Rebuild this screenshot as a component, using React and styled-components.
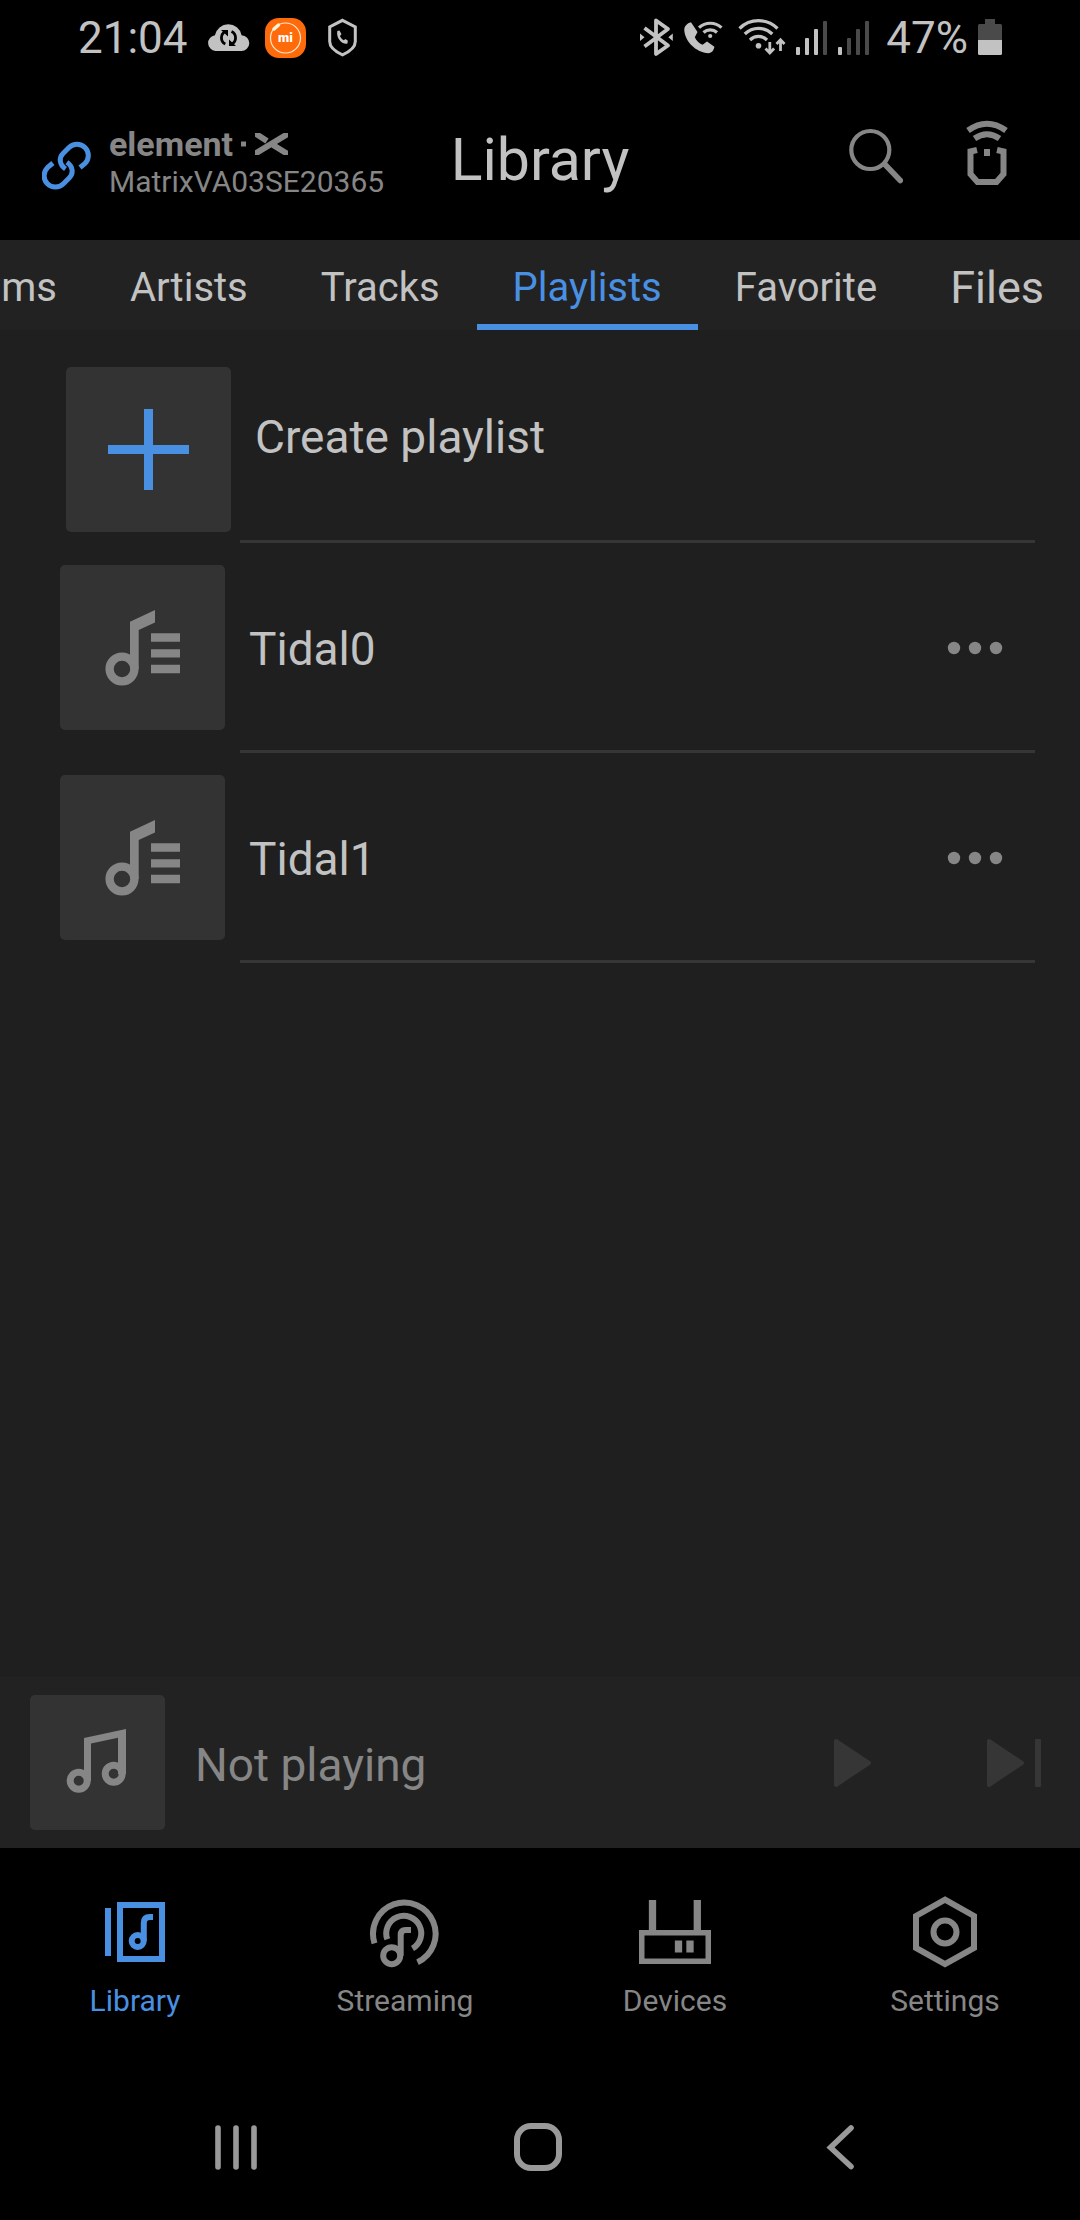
import React, { useState } from 'react'
import styled, { createGlobalStyle, css } from 'styled-components'

const colors = {
  page: '#1f1f1f',
  bar: '#222222',
  tile: '#333333',
  line: '#363636',
  text: '#c2c2c2',
  muted: '#868686',
  accent: '#4a90e2'
}

const GlobalStyle = createGlobalStyle`
  * {
    box-sizing: border-box;
  }

  body {
    margin: 0;
    background: #000;
    color: ${colors.text};
    font-family: Roboto, sans-serif;
  }

  button {
    margin: 0;
    padding: 0;
    border: 0;
    background: none;
    color: inherit;
    font: inherit;
    cursor: pointer;
  }

  svg {
    display: block;
    flex: none;
  }
`

const Screen = styled.div`
  display: flex;
  flex-direction: column;
  min-height: 100vh;
`

/* status bar */

const StatusBar = styled.div`
  display: flex;
  justify-content: space-between;
  align-items: center;
  height: 80px;
  padding: 0 78px 4px;
  font-size: 44px;
  line-height: 52px;
`

const StatusGroup = styled.div`
  display: flex;
  align-items: center;
  gap: ${({ $gap }) => $gap}px;
`

const Percent = styled.span`
  padding-left: 6px;
`

/* header */

const StyledHeader = styled.header`
  display: grid;
  grid-template-columns: 1fr auto 1fr;
  align-items: center;
  height: 160px;
  padding: 0 72px 0 42px;
`

const Device = styled.a`
  display: flex;
  align-items: center;
  gap: 18px;
  width: 0;
  padding-top: 6px;
  color: ${colors.muted};
  font-size: 30px;
  line-height: 36px;
  text-decoration: none;
  white-space: nowrap;
`

const DeviceText = styled.span`
  display: flex;
  flex-direction: column;
  gap: 2px;
`

const Brand = styled.span`
  display: flex;
  align-items: center;
  gap: 8px;
  font-size: 34px;
  font-weight: 700;
`

const Title = styled.h1`
  margin: 0;
  padding-left: 30px;
  font-size: 59px;
  font-weight: 400;
  line-height: 70px;
`

const Tools = styled.div`
  display: flex;
  justify-content: flex-end;
  gap: 63px;
  padding-bottom: 14px;
  color: ${colors.muted};
`

/* tabs */

const Tabs = styled.nav`
  display: flex;
  justify-content: flex-end;
  gap: 1px;
  height: 90px;
  overflow: hidden;
  background: ${colors.bar};
`

const Tab = styled.button`
  flex: none;
  padding: 10px 36px 0;
  border-bottom: 6px solid transparent;
  font-size: ${({ $large }) => ($large ? 45 : 40)}px;

  ${({ $active }) =>
    $active &&
    css`
      border-bottom-color: ${colors.accent};
      color: ${colors.accent};
    `}
`

/* playlists */

const Content = styled.main`
  flex: 1;
  background: ${colors.page};
`

const List = styled.ul`
  margin: 0;
  padding: 0;
  list-style: none;
`

const Row = styled.li`
  display: flex;
`

const Tile = styled.div`
  display: flex;
  flex: none;
  justify-content: center;
  align-items: center;
  width: ${({ $size }) => $size}px;
  height: ${({ $size }) => $size}px;
  border-radius: 5px;
  background: ${colors.tile};
  color: ${colors.muted};
`

const PlaylistTile = styled(Tile).attrs({ $size: 165 })`
  margin: 22px 15px 23px 60px;
`

const CreateTile = styled(Tile).attrs({ $size: 165 })`
  margin: 37px 9px 11px 66px;
  color: ${colors.accent};
`

const RowBody = styled.div`
  display: flex;
  flex: 1;
  justify-content: space-between;
  align-items: center;
  margin-right: 45px;
  padding: 0 30px 0 ${({ $inset }) => $inset}px;
  border-bottom: 3px solid ${colors.line};
`

const RowTitle = styled.button`
  flex: 1;
  padding-top: 4px;
  font-size: 46px;
  line-height: 54px;
  text-align: left;
`

const MoreButton = styled.button`
  padding: 22px 0 20px;
  color: ${colors.muted};
`

/* player */

const Player = styled.section`
  display: flex;
  align-items: center;
  gap: 30px;
  padding: 18px 39px 18px 30px;
  background: ${colors.bar};
`

const NowPlaying = styled.span`
  flex: 1;
  padding-top: 4px;
  color: ${colors.muted};
  font-size: 46px;
  line-height: 54px;
`

const Controls = styled.div`
  display: flex;
  gap: 116px;
  color: ${colors.line};
`

/* bottom navigation */

const BottomNav = styled.nav`
  display: flex;
  height: 227px;
  padding-top: 48px;
`

const NavLink = styled.a`
  display: flex;
  flex: 1;
  flex-direction: column;
  align-items: center;
  gap: 15px;
  color: ${({ $active }) => ($active ? colors.accent : colors.muted)};
  font-size: 30px;
  line-height: 36px;
  text-decoration: none;
`

const SystemNav = styled.div`
  display: flex;
  height: 145px;
  padding: 0 89px 2px 85px;
  color: #999;
`

const SystemButton = styled.button`
  display: flex;
  flex: 1;
  justify-content: center;
  align-items: center;
`

/* icons */

const Icon = ({ width, height, children, ...rest }) => (
  <svg
    width={width}
    height={height}
    viewBox={`0 0 ${width} ${height}`}
    fill='none'
    stroke='currentColor'
    aria-hidden='true'
    {...rest}
  >
    {children}
  </svg>
)

const CloudSyncIcon = () => (
  <Icon width={49} height={40} stroke='none'>
    <path
      fill='currentColor'
      d='M13.5 33a7.9 7.9 0 0 1-.6-15.7A13.6 13.6 0 0 1 39.6 17.2 7.9 7.9 0 0 1 39.2 33z'
    />
    <g fill='none' stroke='#000' strokeWidth='2.8'>
      <path d='M23.5 13.5a7 7 0 0 0-.2 12.6M29.5 13.5a7 7 0 0 1 .2 12.6' />
    </g>
    <path fill='#000' d='M19 12h7v6.5zM34 28h-7v-6.5z' />
  </Icon>
)

const MiIcon = () => (
  <Icon width={41} height={40} stroke='none'>
    <rect width='41' height='40' rx='14' fill='#ff6a0b' />
    <circle cx='20.5' cy='20' r='15' stroke='#ffe9d0' strokeWidth='1.2' />
    <path d='M9 11l4.5-4' stroke='#fff3d8' strokeWidth='3.5' strokeLinecap='round' />
    <text
      x='20.5'
      y='24'
      fill='#fff'
      fontFamily='Roboto, sans-serif'
      fontSize='13'
      fontWeight='900'
      textAnchor='middle'
    >
      mi
    </text>
  </Icon>
)

const ShieldCallIcon = () => (
  <Icon width={44} height={40} strokeWidth='3'>
    <path d='M22.5 2.3L35.3 9v14.5c0 6-6.5 10.5-12.8 13.3C16.2 34 9.7 29.5 9.7 23.5V9z' />
    <path
      d='M19.5 12.5l2 3.7-1.6 1.9c.9 1.9 2.2 3.3 3.9 4.2l1.7-1.4 2.4 1.8-.6 3C21.5 26.5 16 20 17.3 13z'
      fill='currentColor'
      stroke='none'
    />
  </Icon>
)

const BluetoothIcon = () => (
  <Icon width={36} height={40} strokeWidth='3.8' strokeLinejoin='round'>
    <path d='M6.5 10L30 27.5 18 36V2.5L30 11 6.5 28.5' />
    <path d='M2 15.5l4.5 3.7L2 23zM34.8 15.5l-4.5 3.7 4.5 3.8z' fill='currentColor' stroke='none' />
  </Icon>
)

const WifiCallIcon = () => (
  <Icon width={42} height={40} strokeWidth='3.2'>
    <path
      d='M7 4.2c-4 1-7 4-6.7 8.3C1.3 24 12 34.3 24.5 35.2c3.2 0 5.5-3.2 5.9-6.4L23 23.5l-4.5 3.3c-3.5-1.5-6-4-7.7-7.6l2.7-5.2z'
      fill='currentColor'
      stroke='none'
    />
    <path d='M15 9.7a16.5 16.5 0 0 1 22.5 0M19.5 14.5a10 10 0 0 1 13.5 0' />
    <circle cx='26.2' cy='18' r='2.1' fill='currentColor' stroke='none' />
  </Icon>
)

const WifiIcon = () => (
  <Icon width={50} height={40} strokeWidth='3.2'>
    <path d='M3.5 10.5a27 27 0 0 1 38 0M8.8 16a19.5 19.5 0 0 1 27.5 0M14 22a12 12 0 0 1 17 0' />
    <circle cx='22.5' cy='27.8' r='2.8' fill='currentColor' stroke='none' />
    <path d='M33.8 24v11M29.5 30.5l4.3 4.5 4.3-4.5M44.5 33V21.5M40.5 26l4-4.3 4 4.3' strokeWidth='2.8' />
  </Icon>
)

const SignalIcon = ({ level }) => (
  <Icon width={32} height={40} stroke='none'>
    {[8, 17, 26, 34].map((h, i) => (
      <rect
        key={h}
        x={i * 9}
        y={37 - h}
        width='4'
        height={h}
        rx='1'
        fill={i < level ? 'currentColor' : '#4a4a4a'}
      />
    ))}
  </Icon>
)

const BatteryIcon = () => (
  <Icon width={24} height={40} stroke='none'>
    <path d='M7 1h10v5h5.5a1.5 1.5 0 0 1 1.5 1.5V22H0V7.5A1.5 1.5 0 0 1 1.5 6H7z' fill='#4a4a4a' />
    <path d='M0 22h24v13.5a1.5 1.5 0 0 1-1.5 1.5h-21A1.5 1.5 0 0 1 0 35.5z' fill='currentColor' />
  </Icon>
)

const LinkIcon = () => (
  <Icon width={49} height={56} stroke={colors.accent} strokeWidth='5'>
    <g transform='translate(0 6)'>
      <path d='M23.5 28C17 23.5 17 16.5 21 12.5L27 6.5A11.3 11.3 0 0 1 43 22.5L38 26.5' />
      <path d='M24.9 21.2C31.4 25.7 31.4 32.7 27.4 36.7L21.4 42.7A11.3 11.3 0 0 1 5.4 26.7L10.9 22' />
    </g>
  </Icon>
)

const BrandMark = () => (
  <Icon width={47} height={22} strokeWidth='6'>
    <path d='M0 11h5' strokeWidth='5' />
    <g clipPath='url(#mark)'>
      <path d='M12 22L50-1M12-1l14 9M32 12l18 11' />
    </g>
    <clipPath id='mark'>
      <path d='M14 0h33v22H14z' />
    </clipPath>
  </Icon>
)

const SearchIcon = () => (
  <Icon width={54} height={66} strokeWidth='4.2' strokeLinecap='round'>
    <circle cx='21.3' cy='30' r='19' />
    <path d='M36 44.5L51.3 60.5' strokeWidth='5.5' />
  </Icon>
)

const RemoteIcon = () => (
  <Icon width={42} height={66} strokeWidth='6'>
    <path d='M2 10.5Q21-3 40 10.5M8.5 18.5Q21 10 33.5 18.5' />
    <path d='M11 30l-6.5 1.5V54l7 8h19l7-8V31.5L31 30' />
    <path d='M21 29v7' />
  </Icon>
)

const PlusIcon = () => (
  <Icon width={81} height={81} strokeWidth='9'>
    <path d='M40.5 0v81M0 40.5h81' />
  </Icon>
)

const PlaylistIcon = () => (
  <Icon width={165} height={165} strokeWidth='8.3'>
    <circle cx='62' cy='104' r='12.4' />
    <path d='M70 56.7L95 45v12.6L78.7 65v39H70z' fill='currentColor' stroke='none' />
    <path d='M91 72.5h29M91 88.3h29M91 104h29' />
  </Icon>
)

const MoreIcon = () => (
  <Icon width={60} height={14} fill='currentColor' stroke='none'>
    <circle cx='9' cy='7' r='6.2' />
    <circle cx='30' cy='7' r='6.2' />
    <circle cx='51' cy='7' r='6.2' />
  </Icon>
)

const MusicIcon = () => (
  <Icon width={135} height={135} strokeWidth='7'>
    <circle cx='48.7' cy='85.7' r='8.5' />
    <circle cx='83.7' cy='78.7' r='8.5' />
    <path
      d='M54 43l42-9v45h-8V42.8L61 48.5V86h-7z'
      fill='currentColor'
      stroke='none'
    />
  </Icon>
)

const PlayIcon = () => (
  <Icon width={37} height={50} fill='currentColor' strokeWidth='4' strokeLinejoin='round'>
    <path d='M2 3l33 22L2 47z' />
  </Icon>
)

const NextIcon = () => (
  <Icon width={54} height={50} fill='currentColor' strokeWidth='4' strokeLinejoin='round'>
    <path d='M2 3l33 22L2 47z' />
    <rect x='48' y='1' width='6' height='48' rx='1' stroke='none' />
  </Icon>
)

const LibraryIcon = () => (
  <Icon width={72} height={72} strokeWidth='6'>
    <path d='M9 12v48M21 9h42v54H21z' />
    <circle cx='38.7' cy='45' r='6' />
    <path d='M44.8 45V27q0-6 6-6h3.2' />
  </Icon>
)

const StreamingIcon = () => (
  <Icon width={72} height={72} strokeWidth='6'>
    <path d='M5.5 47.3A31.3 31.3 0 1 1 48.5 66.2' />
    <path d='M18.3 43.3A17.5 17.5 0 1 1 43.5 52.5' />
    <circle cx='22.7' cy='59.7' r='8.5' />
    <path d='M31.7 59.7V39q0-5 5-5H42' />
  </Icon>
)

const DevicesIcon = () => (
  <Icon width={72} height={72} strokeWidth='5.5'>
    <path d='M2.75 36.75h66.5v28.5H2.75z' />
    <path d='M13.5 4v31M58.3 4v31M39.5 44.5v12M51 44.5v12' strokeWidth='7.3' />
  </Icon>
)

const SettingsIcon = () => (
  <Icon width={72} height={72} strokeWidth='6'>
    <path d='M36 3.7l29 16.2v32L36 68.1 7 51.9v-32z' />
    <circle cx='36' cy='36' r='11.5' />
  </Icon>
)

const RecentsIcon = () => (
  <Icon width={48} height={48} strokeWidth='5.6' strokeLinecap='round'>
    <path d='M6 5v39M24 5v39M42 5v39' />
  </Icon>
)

const HomeIcon = () => (
  <Icon width={48} height={48} strokeWidth='6'>
    <rect x='3' y='3' width='42' height='42' rx='14' />
  </Icon>
)

const BackIcon = () => (
  <Icon width={48} height={48} strokeWidth='5.6' strokeLinecap='round'>
    <path d='M35 5L14.5 24.5 35 43.5' />
  </Icon>
)

const tabs = ['Albums', 'Artists', 'Tracks', 'Playlists', 'Favorite', 'Files']

const playlists = ['Tidal0', 'Tidal1']

const sections = [
  { name: 'Library', icon: LibraryIcon },
  { name: 'Streaming', icon: StreamingIcon },
  { name: 'Devices', icon: DevicesIcon },
  { name: 'Settings', icon: SettingsIcon }
]

const Header = () => (
  <StyledHeader>
    <Device href='#device'>
      <LinkIcon />
      <DeviceText>
        <Brand>
          element
          <BrandMark />
        </Brand>
        <span>MatrixVA03SE20365</span>
      </DeviceText>
    </Device>

    <Title>Library</Title>

    <Tools>
      <button type='button' aria-label='Search'>
        <SearchIcon />
      </button>
      <button type='button' aria-label='Remote'>
        <RemoteIcon />
      </button>
    </Tools>
  </StyledHeader>
)

const App = () => {
  const [tab, setTab] = useState('Playlists')

  return (
    <Screen>
      <GlobalStyle />

      <StatusBar>
        <StatusGroup $gap={14}>
          <span>21:04</span>
          <CloudSyncIcon />
          <MiIcon />
          <ShieldCallIcon />
        </StatusGroup>
        <StatusGroup $gap={10}>
          <BluetoothIcon />
          <WifiCallIcon />
          <WifiIcon />
          <SignalIcon level={3} />
          <SignalIcon level={1} />
          <Percent>47%</Percent>
          <BatteryIcon />
        </StatusGroup>
      </StatusBar>

      <Header />

      <Tabs>
        {tabs.map(name => (
          <Tab
            key={name}
            type='button'
            $active={name === tab}
            $large={name === 'Files'}
            onClick={() => setTab(name)}
          >
            {name}
          </Tab>
        ))}
      </Tabs>

      <Content>
        <List>
          <Row>
            <CreateTile>
              <PlusIcon />
            </CreateTile>
            <RowBody $inset={15}>
              <RowTitle type='button'>Create playlist</RowTitle>
            </RowBody>
          </Row>

          {playlists.map(name => (
            <Row key={name}>
              <PlaylistTile>
                <PlaylistIcon />
              </PlaylistTile>
              <RowBody $inset={9}>
                <RowTitle type='button'>{name}</RowTitle>
                <MoreButton type='button' aria-label={`More options for ${name}`}>
                  <MoreIcon />
                </MoreButton>
              </RowBody>
            </Row>
          ))}
        </List>
      </Content>

      <Player>
        <Tile $size={135}>
          <MusicIcon />
        </Tile>
        <NowPlaying>Not playing</NowPlaying>
        <Controls>
          <button type='button' aria-label='Play'>
            <PlayIcon />
          </button>
          <button type='button' aria-label='Next'>
            <NextIcon />
          </button>
        </Controls>
      </Player>

      <BottomNav>
        {sections.map(({ name, icon: SectionIcon }) => (
          <NavLink key={name} href={`#${name.toLowerCase()}`} $active={name === 'Library'}>
            <SectionIcon />
            {name}
          </NavLink>
        ))}
      </BottomNav>

      <SystemNav>
        <SystemButton type='button' aria-label='Recent apps'>
          <RecentsIcon />
        </SystemButton>
        <SystemButton type='button' aria-label='Home'>
          <HomeIcon />
        </SystemButton>
        <SystemButton type='button' aria-label='Back'>
          <BackIcon />
        </SystemButton>
      </SystemNav>
    </Screen>
  )
}

export default App
